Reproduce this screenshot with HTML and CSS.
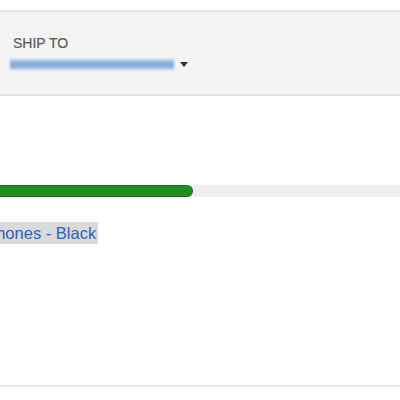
FILE: index.html
```html
<!DOCTYPE html>
<html>
<head>
<meta charset="utf-8">
<link rel="stylesheet" href="styles.css">
</head>
<body>
<div class="page">
  <div class="spacer"></div>
  <section class="ship">
    <div class="ship-label">SHIP TO</div>
    <div class="ship-select">
      <div class="redacted"></div>
      <div class="caret"></div>
    </div>
  </section>
  <section class="main">
    <div class="progress"><div class="fill" style="width:193px"></div></div>
    <div class="product"><a class="name">phones - Black</a></div>
    <div class="footer-line"></div>
  </section>
</div>
</body>
</html>
```
FILE: styles.css
```css
html, body {
  margin: 0;
  padding: 0;
  background: #ffffff;
  font-family: "Liberation Sans", Arial, sans-serif;
}
.page {
  width: 400px;
  height: 400px;
  overflow: hidden;
}
.spacer {
  height: 10px;
}
.ship {
  background: #f4f4f4;
  border-top: 2px solid #e5e5e5;
  border-bottom: 2px solid #e2e2e2;
  padding: 23px 12px 24px 12px;
  height: 35px;
}
.ship-label {
  font-size: 14px;
  line-height: 16px;
  color: #5a5a5a;
  padding-left: 1px;
  -webkit-text-stroke: 0.2px #5a5a5a;
}
.ship-select {
  display: flex;
  align-items: center;
  margin-top: 7px;
  height: 12px;
}
.redacted {
  width: 164px;
  height: 11px;
  margin-left: -2px;
  background: linear-gradient(180deg, #c8d9ef 0%, #8aaedd 35%, #86abdc 65%, #c8d9ef 100%);
  filter: blur(1.2px);
}
.caret {
  margin-left: 6px;
  width: 0;
  height: 0;
  border-left: 4px solid transparent;
  border-right: 4px solid transparent;
  border-top: 5px solid #333;
}
.main {
  padding-top: 89px;
}
.progress {
  height: 12px;
  background: #efefef;
  display: flex;
}
.fill {
  height: 12px;
  box-sizing: border-box;
  background: #1f8f1f;
  border: 1px solid #1a701a;
  border-left: none;
  border-radius: 0 7px 7px 0;
}
.product {
  margin-top: 25px;
  height: 22px;
}
.name {
  display: inline-block;
  margin-left: -13px;
  padding-right: 2px;
  font-size: 16.5px;
  line-height: 22px;
  color: #2f62bd;
  background: #dadada;
}
.footer-line {
  margin-top: 141px;
  height: 2px;
  background: #e6e6e6;
}
```
